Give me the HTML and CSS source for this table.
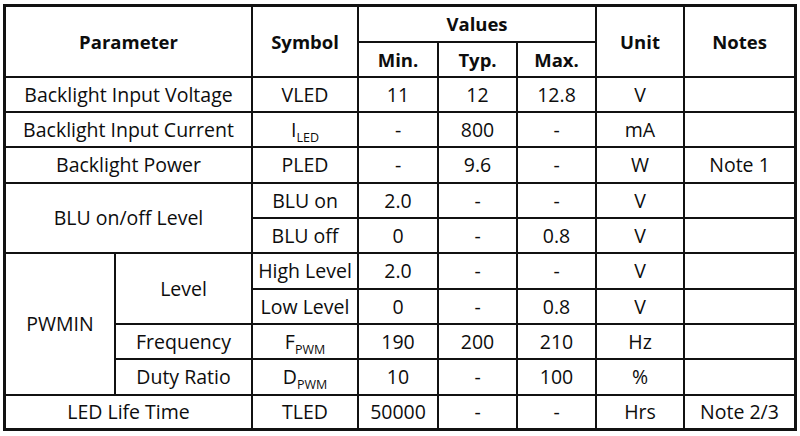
FILE: index.html
```html
<!DOCTYPE html>
<html lang="en">
<head>
<meta charset="utf-8">
<title>Backlight Characteristics</title>
<link rel="stylesheet" href="styles.css">
</head>
<body>
<table class="spec">
  <colgroup>
    <col class="c-a"><col class="c-b"><col class="c-sym"><col class="c-min"><col class="c-typ"><col class="c-max"><col class="c-unit"><col class="c-notes">
  </colgroup>
  <thead>
    <tr class="h36">
      <th colspan="2" rowspan="2">Parameter</th>
      <th rowspan="2">Symbol</th>
      <th colspan="3">Values</th>
      <th rowspan="2">Unit</th>
      <th rowspan="2" class="last-col">Notes</th>
    </tr>
    <tr class="h35">
      <th>Min.</th>
      <th>Typ.</th>
      <th>Max.</th>
    </tr>
  </thead>
  <tbody>
    <tr class="h35">
      <td colspan="2">Backlight Input Voltage</td>
      <td>VLED</td>
      <td>11</td>
      <td>12</td>
      <td class="shift">12.8</td>
      <td>V</td>
      <td class="last-col"></td>
    </tr>
    <tr class="h35">
      <td colspan="2">Backlight Input Current</td>
      <td>I<sub class="sub">LED</sub></td>
      <td>-</td>
      <td>800</td>
      <td>-</td>
      <td>mA</td>
      <td class="last-col"></td>
    </tr>
    <tr class="h36">
      <td colspan="2">Backlight Power</td>
      <td>PLED</td>
      <td>-</td>
      <td>9.6</td>
      <td>-</td>
      <td>W</td>
      <td class="last-col">Note 1</td>
    </tr>
    <tr class="h35">
      <td colspan="2" rowspan="2">BLU on/off Level</td>
      <td>BLU on</td>
      <td>2.0</td>
      <td>-</td>
      <td>-</td>
      <td>V</td>
      <td class="last-col"></td>
    </tr>
    <tr class="h35">
      <td>BLU off</td>
      <td>0</td>
      <td>-</td>
      <td>0.8</td>
      <td>V</td>
      <td class="last-col"></td>
    </tr>
    <tr class="h36">
      <td rowspan="4">PWMIN</td>
      <td rowspan="2">Level</td>
      <td>High Level</td>
      <td>2.0</td>
      <td>-</td>
      <td>-</td>
      <td>V</td>
      <td class="last-col"></td>
    </tr>
    <tr class="h35">
      <td>Low Level</td>
      <td>0</td>
      <td>-</td>
      <td>0.8</td>
      <td>V</td>
      <td class="last-col"></td>
    </tr>
    <tr class="h35">
      <td>Frequency</td>
      <td>F<sub class="sub">PWM</sub></td>
      <td>190</td>
      <td>200</td>
      <td>210</td>
      <td>Hz</td>
      <td class="last-col"></td>
    </tr>
    <tr class="h36">
      <td>Duty Ratio</td>
      <td>D<sub class="sub">PWM</sub></td>
      <td>10</td>
      <td>-</td>
      <td>100</td>
      <td>%</td>
      <td class="last-col"></td>
    </tr>
    <tr class="h32 last-row">
      <td colspan="2">LED Life Time</td>
      <td>TLED</td>
      <td>50000</td>
      <td>-</td>
      <td>-</td>
      <td>Hrs</td>
      <td class="last-col">Note 2/3</td>
    </tr>
  </tbody>
</table>
</body>
</html>
```

FILE: styles.css
```css
html, body {
  margin: 0;
  padding: 0;
  background: #ffffff;
}

body {
  padding: 4px 0 0 3px;
  font-family: "Open Sans", "Noto Sans", "DejaVu Sans", sans-serif;
  color: #0d0d0d;
}

.spec {
  border-collapse: separate;
  border-spacing: 0;
  table-layout: fixed;
  width: 794px;
  border: 3px solid #111111;
  font-size: 19.5px;
}

.c-a { width: 110px; }
.c-b { width: 137px; }
.c-sym { width: 106px; }
.c-min { width: 80px; }
.c-typ { width: 79px; }
.c-max { width: 79px; }
.c-unit { width: 88px; }
.c-notes { width: 109px; }

.spec th,
.spec td {
  box-sizing: border-box;
  padding: 0;
  text-align: center;
  vertical-align: middle;
  border-right: 2px solid #111111;
  border-bottom: 2px solid #111111;
  line-height: 24px;
  white-space: nowrap;
}

.spec th {
  font-weight: 700;
  font-size: 18.5px;
}

.spec .last-col {
  border-right: none;
}

.spec .last-row td {
  border-bottom: none;
}

.h36 { height: 36px; }
.h35 { height: 35px; }
.h32 { height: 32px; }

.sub {
  font-size: 12.5px;
  vertical-align: -5px;
  line-height: 0;
}

.shift {
  padding-left: 16px;
}
```
